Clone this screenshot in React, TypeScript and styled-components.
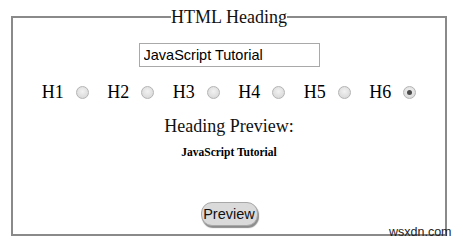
import React, { useState } from "react";
import styled, { createGlobalStyle } from "styled-components";

const Global = createGlobalStyle`
  html, body { margin: 0; padding: 0; background: #fff; }
  body { font-family: "Liberation Serif", "Times New Roman", serif; color: #000; }
`;

const Page = styled.div`
  position: relative;
  width: 463px;
  height: 242px;
  padding-top: 7px;
  box-sizing: border-box;
  overflow: hidden;
`;

const Frame = styled.fieldset`
  margin: 0 0 0 11px;
  width: 436px;
  box-sizing: border-box;
  border: 2px solid #8a8a8a;
  padding: 0 0 8px 0;
  display: flex;
  flex-direction: column;
  align-items: center;
`;

const Legend = styled.legend`
  margin: 0 auto;
  padding: 0;
  font-size: 18px;
  line-height: 20px;
  color: #111;
`;

const TextBox = styled.input`
  margin-top: 16px;
  width: 181px;
  height: 24px;
  box-sizing: border-box;
  border: 1px solid #a9a9a9;
  padding: 0 0 0 4px;
  font-family: "Liberation Sans", Arial, sans-serif;
  font-size: 14.5px;
  color: #000;
  outline: none;
`;

const RadioRow = styled.div`
  margin-top: 15px;
  height: 20px;
  display: flex;
  align-items: center;
  justify-content: center;
`;

const Group = styled.label<{ $last?: boolean }>`
  display: flex;
  align-items: center;
  font-size: 18px;
  line-height: 20px;
  margin-right: ${(p) => (p.$last ? "0" : "18.5px")};
`;

const Radio = styled.input`
  appearance: none;
  -webkit-appearance: none;
  margin: 1px 0 0 12px;
  width: 13px;
  height: 13px;
  border-radius: 50%;
  border: 1px solid #b4b4b4;
  box-sizing: border-box;
  background: radial-gradient(circle at 50% 40%, #f2f2f2 0%, #dcdcdc 70%, #cfcfcf 100%);
  position: relative;
  &:checked::after {
    content: "";
    position: absolute;
    left: 3px;
    top: 3px;
    width: 5px;
    height: 5px;
    border-radius: 50%;
    background: #4a4a4a;
  }
`;

const PreviewTitle = styled.div`
  margin-top: 14px;
  font-size: 18px;
  line-height: 20px;
  color: #111;
`;

const PreviewText = styled.h6`
  margin: 9px 0 0 0;
  font-size: 11.5px;
  line-height: 14px;
  font-weight: bold;
`;

const Button = styled.button`
  margin-top: 43px;
  width: 57px;
  height: 24px;
  padding: 0;
  border: 1px solid #a8a8a8;
  border-radius: 11px;
  background: #dadada;
  box-shadow: 1px 2px 1px #8c8c8c;
  font-family: "Liberation Sans", Arial, sans-serif;
  font-size: 14.5px;
  color: #111;
`;

const Watermark = styled.div`
  position: absolute;
  left: 389px;
  top: 225px;
  font-family: "Liberation Sans", Arial, sans-serif;
  font-size: 12.5px;
  line-height: 14px;
  color: #222;
`;

export default function App() {
  const [level, setLevel] = useState(6);
  const [text, setText] = useState("JavaScript Tutorial");
  const levels = [1, 2, 3, 4, 5, 6];
  return (
    <>
      <Global />
      <Page>
        <Frame>
          <Legend>HTML Heading</Legend>
          <TextBox value={text} onChange={(e) => setText(e.target.value)} />
          <RadioRow>
            {levels.map((l) => (
              <Group key={l} $last={l === 6}>
                H{l}
                <Radio
                  type="radio"
                  name="h"
                  checked={level === l}
                  onChange={() => setLevel(l)}
                />
              </Group>
            ))}
          </RadioRow>
          <PreviewTitle>Heading Preview:</PreviewTitle>
          <PreviewText>{text}</PreviewText>
          <Button>Preview</Button>
        </Frame>
        <Watermark>wsxdn.com</Watermark>
      </Page>
    </>
  );
}
